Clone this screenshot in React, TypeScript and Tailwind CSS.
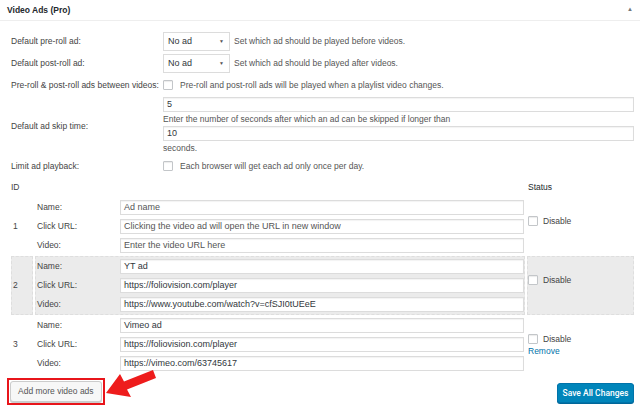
import React from "react";

const Input = ({ value, placeholder }: { value?: string; placeholder?: string }) => (
  <div className="h-[15px] w-full border border-[#dcdcdc] bg-white shadow-[inset_0_1px_1px_rgba(0,0,0,0.05)] flex items-center px-[3px] text-[9px] leading-none">
    {value ? <span className="text-[#32373c]">{value}</span> : <span className="text-[#555]">{placeholder}</span>}
  </div>
);

const Checkbox = () => (
  <div className="w-[10px] h-[10px] border border-[#c3c6c9] bg-white rounded-[1px] shrink-0 shadow-[inset_0_1px_1px_rgba(0,0,0,0.08)]" />
);

const Select = () => (
  <div className="w-[67px] h-[19px] border border-[#dcdcdc] bg-white flex items-center justify-between pl-[4px] pr-[5px] text-[9px] text-[#32373c] shrink-0">
    <span>No ad</span>
    <span className="text-[5px] text-[#555]">▼</span>
  </div>
);

type Ad = { id: string; name?: string; url?: string; video?: string; gray?: boolean; remove?: boolean };

const ads: Ad[] = [
  { id: "1" },
  { id: "2", name: "YT ad", url: "https://foliovision.com/player", video: "https://www.youtube.com/watch?v=cfSJI0tUEeE", gray: true },
  { id: "3", name: "Vimeo ad", url: "https://foliovision.com/player", video: "https://vimeo.com/63745617", remove: true },
];

const AdRow = ({ ad }: { ad: Ad }) => {
  const bg = ad.gray ? "bg-[#ebebeb]" : "bg-transparent";
  const brd = ad.gray ? "border border-dashed border-[#dedede]" : "border border-transparent";
  return (
    <div className="flex h-[59px] gap-[2px]">
      <div className={`w-[22px] ${bg} ${brd} flex items-center pl-[1px] text-[#444]`}>{ad.id}</div>
      <div className={`w-[490px] ${bg} ${brd} flex flex-col py-0`}>
        {[
          ["Name:", ad.name, "Ad name"],
          ["Click URL:", ad.url, "Clicking the video ad will open the URL in new window"],
          ["Video:", ad.video, "Enter the video URL here"],
        ].map(([label, value, ph]) => (
          <div key={label} className="h-[19px] flex items-center">
            <div className="w-[84px] pl-[1px] text-[#444]">{label}</div>
            <div className="flex-1">
              <Input value={value} placeholder={ph} />
            </div>
          </div>
        ))}
      </div>
      <div className={`flex-1 ${bg} ${brd} flex flex-col justify-center`}>
        <div className="flex items-center gap-[5px] text-[#444]">
          <Checkbox />
          <span>Disable</span>
        </div>
        <div className={`text-[#0073aa] mt-[3px] ${ad.remove ? "" : "invisible"}`}>Remove</div>
      </div>
    </div>
  );
};

export default function App() {
  return (
    <div className="relative w-[640px] h-[410px] overflow-hidden bg-white font-['Liberation_Sans',Arial,sans-serif] text-[8.5px] leading-none text-[#444]">
      <div className="h-[21px] border-b border-[#eeeeee] flex items-center justify-between pl-[7px] pr-[7px]">
        <span className="font-bold text-[8.5px] text-[#23282d]">Video Ads (Pro)</span>
        <span className="text-[6px] text-[#72777c] -mt-[2px]">▲</span>
      </div>

      <div className="pl-[11px] pr-[6px] pt-[9px]">
        <div className="h-[22px] flex items-center">
          <div className="w-[152px]">Default pre-roll ad:</div>
          <Select />
          <span className="ml-[4px] text-[#555]">Set which ad should be played before videos.</span>
        </div>
        <div className="h-[22px] flex items-center">
          <div className="w-[152px]">Default post-roll ad:</div>
          <Select />
          <span className="ml-[4px] text-[#555]">Set which ad should be played after videos.</span>
        </div>
        <div className="h-[22px] flex items-center">
          <div className="w-[152px]">Pre-roll &amp; post-roll ads between videos:</div>
          <Checkbox />
          <span className="ml-[7px] text-[#555]">Pre-roll and post-roll ads will be played when a playlist video changes.</span>
        </div>
        <div className="flex items-center mt-[1px]">
          <div className="w-[152px]">Default ad skip time:</div>
          <div className="flex-1 flex flex-col">
            <Input value="5" />
            <div className="h-[14px] flex items-center text-[#555]">Enter the number of seconds after which an ad can be skipped if longer than</div>
            <Input value="10" />
            <div className="h-[14px] flex items-center text-[#555]">seconds.</div>
          </div>
        </div>
        <div className="h-[22px] flex items-center">
          <div className="w-[152px]">Limit ad playback:</div>
          <Checkbox />
          <span className="ml-[7px] text-[#555]">Each browser will get each ad only once per day.</span>
        </div>
      </div>

      <div className="pl-[11px] pr-[6px]">
        <div className="h-[20px] flex items-center">
          <div className="w-[517px]">ID</div>
          <div className="text-[#23282d]">Status</div>
        </div>
        <div className="flex flex-col">
          {ads.map((ad) => (
            <AdRow key={ad.id} ad={ad} />
          ))}
        </div>
      </div>

      <div className="flex items-center justify-between pl-[7px] pr-[6px] mt-[4px]">
        <div className="border-2 border-[#e8151b] p-[1px]">
          <div className="h-[21px] px-[7px] flex items-center bg-[#f7f7f7] border border-[#cccccc] rounded-[3px] shadow-[0_1px_0_#ccc] text-[#555] text-[8.5px]">
            Add more video ads
          </div>
        </div>
        <div className="h-[20px] w-[77px] mt-[3px] flex items-center justify-center bg-[#0085ba] border border-[#0073aa] rounded-[3px] text-white font-['Roboto',Arial,sans-serif] font-medium text-[8.5px] shadow-[0_1px_0_#006799]">
          Save All Changes
        </div>
      </div>

      <svg className="absolute left-0 top-0 pointer-events-none" width="640" height="410">
        <polygon
          points="106,393 131,397 127,389.5 156,378 153,370 124,381.5 120,374"
          fill="#ee1c1c"
        />
      </svg>
    </div>
  );
}
